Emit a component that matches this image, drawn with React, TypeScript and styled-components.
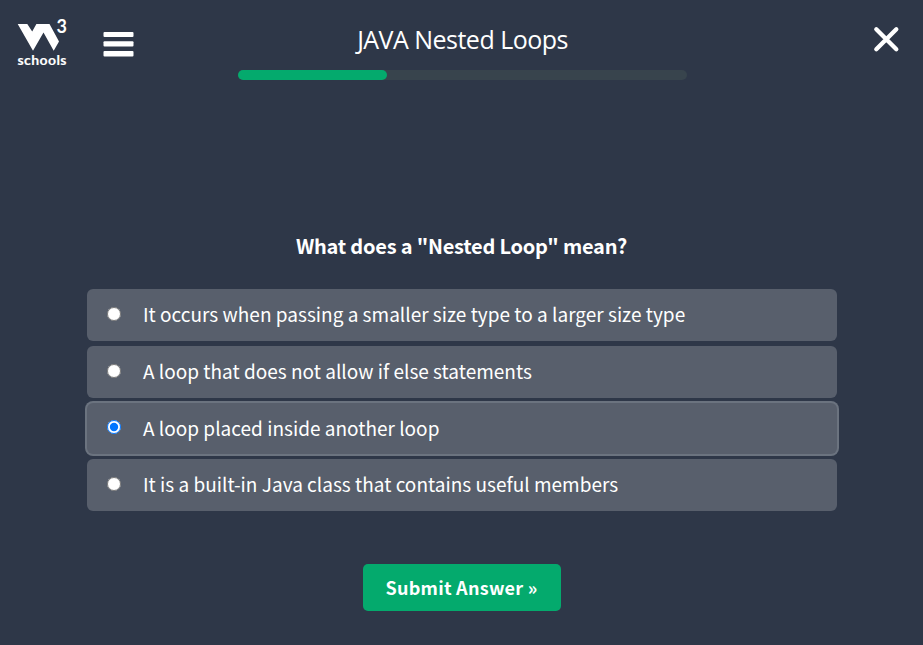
import React, { useState } from "react";
import styled, { createGlobalStyle } from "styled-components";

const GlobalStyle = createGlobalStyle`
  *, *::before, *::after { box-sizing: border-box; }
  body {
    margin: 0;
    background: #2e3748;
    color: #fff;
    font-family: "Noto Sans CJK SC", "Open Sans", sans-serif;
    overflow: hidden;
  }
`;

const Page = styled.div`
  height: 645px;
  display: flex;
  flex-direction: column;
  align-items: center;
`;

const Header = styled.header`
  width: 100%;
  height: 80px;
  display: grid;
  grid-template-columns: 238px 449px 1fr;
  align-items: start;
`;

const Brand = styled.div`
  display: flex;
  gap: 35px;
  padding: 16px 0 0 16px;
`;

const MenuButton = styled.button`
  width: 32px;
  height: 30px;
  margin-top: 14px;
  padding: 0;
  border: 0;
  background: none;
  svg { display: block; }
`;

const Title = styled.h1`
  margin: 0;
  height: 70px;
  padding-top: 21px;
  text-align: center;
  font: 400 25px/36px "Open Sans", sans-serif;
  letter-spacing: -0.52px;
  white-space: nowrap;
`;

const Track = styled.div`
  height: 10px;
  border-radius: 5px;
  background: #38444d;
`;

const Fill = styled.div`
  width: 149px;
  height: 10px;
  border-radius: 5px;
  background: #04aa6d;
`;

const CloseButton = styled.button`
  justify-self: end;
  margin: 25px 23px 0 0;
  padding: 0;
  border: 0;
  background: none;
  svg { display: block; }
`;

const Question = styled.h2`
  margin: 149px 0 0;
  height: 60px;
  font-size: 20px;
  line-height: 34px;
  font-weight: 700;
  letter-spacing: -0.22px;
  white-space: nowrap;
`;

const Options = styled.div`
  width: 750px;
  display: flex;
  flex-direction: column;
  gap: 5px;
`;

const Option = styled.label<{ $selected: boolean }>`
  height: ${(p) => (p.$selected ? 51 : 52)}px;
  display: flex;
  align-items: center;
  padding: 0 0 2px 20.5px;
  border-radius: 6px;
  background: #585f6c;
  box-shadow: ${(p) => (p.$selected ? "0 0 0 2px #6b737f" : "none")};
  font-size: 19px;
  line-height: 28px;
  letter-spacing: 0.015px;
  white-space: nowrap;
`;

const Radio = styled.input`
  width: 14px;
  height: 14px;
  margin: 0 22px 1px 0;
`;

const Submit = styled.button`
  width: 198px;
  height: 47px;
  margin-top: 53px;
  padding: 0 0 2px;
  border: 0;
  border-radius: 5px;
  background: #04aa6d;
  color: #fff;
  font: 700 18px/28px "Noto Sans CJK SC", sans-serif;
  letter-spacing: 0.26px;
`;

const answers = [
  "It occurs when passing a smaller size type to a larger size type",
  "A loop that does not allow if else statements",
  "A loop placed inside another loop",
  "It is a built-in Java class that contains useful members",
];

const LogoText = styled.text`
  font-family: Lato, sans-serif;
  font-weight: 700;
  fill: #fff;
`;

const Logo = () => (
  <svg width="52" height="52" viewBox="16 16 52 52" role="img" aria-label="W3Schools">
    <path d="M17.700 24H27.300l4.900 7.500L36.400 24h13.100l9.500 17.500-5.300 9.200L43.500 32.500 33 50.700z" fill="#fff" />
    <LogoText x="56.500" y="32.800" fontSize="18">3</LogoText>
    <LogoText x="17.500" y="64.600" fontSize="14" stroke="#fff" strokeWidth=".15" textLength="49">schools</LogoText>
  </svg>
);

export default function App() {
  const [selected, setSelected] = useState(2);
  return (
    <>
      <GlobalStyle />
      <Page>
        <Header>
          <Brand>
            <Logo />
            <MenuButton aria-label="Menu">
              <svg width="32" height="28" viewBox="0 0 32 28" fill="#fff">
                <rect x=".5" y="1" width="30" height="5" rx="1" />
                <rect x=".5" y="10.300" width="30" height="5.300" rx="1" />
                <rect x=".5" y="20" width="30" height="5.500" rx="1" />
              </svg>
            </MenuButton>
          </Brand>
          <div>
            <Title>JAVA Nested Loops</Title>
            <Track><Fill /></Track>
          </div>
          <CloseButton aria-label="Close">
            <svg width="28" height="28" viewBox="0 0 28 28">
              <path d="M4.300 4.300 24.300 24.300M24.300 4.300 4.300 24.300" stroke="#fff" strokeWidth="4.300" strokeLinecap="round" />
            </svg>
          </CloseButton>
        </Header>
        <Question>What does a "Nested Loop" mean?</Question>
        <Options>
          {answers.map((text, i) => (
            <Option key={text} $selected={i === selected}>
              <Radio type="radio" name="answer" checked={i === selected} onChange={() => setSelected(i)} />
              {text}
            </Option>
          ))}
        </Options>
        <Submit>Submit Answer »</Submit>
      </Page>
    </>
  );
}
